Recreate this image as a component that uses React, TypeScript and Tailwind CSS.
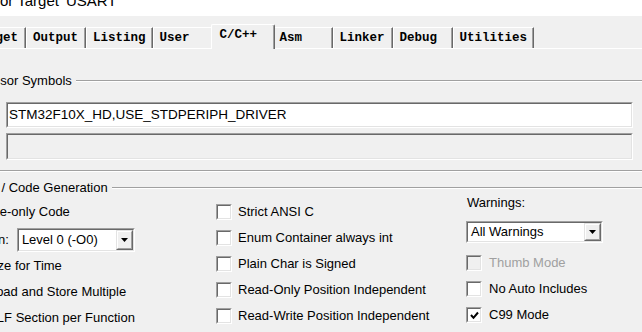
import React from "react";

const CB = ({ checked = false, disabled = false }: { checked?: boolean; disabled?: boolean }) => (
  <div className="w-[16px] h-[16px] shrink-0 border border-t-[#a0a0a0] border-l-[#a0a0a0] border-b-white border-r-white">
    <div
      className={
        disabled
          ? "w-full h-full border border-t-[#696969] border-l-[#696969] border-b-[#e3e3e3] border-r-[#e3e3e3] bg-[#f0f0f0]"
          : "w-full h-full border border-t-[#696969] border-l-[#696969] border-b-[#e3e3e3] border-r-[#e3e3e3] bg-white flex items-center justify-center"
      }
    >
      {checked && (
        <svg width="9" height="9" viewBox="0 0 9 9">
          <path d="M1 4 L3.5 6.8 L8 1.5" stroke="black" strokeWidth="2" fill="none" />
        </svg>
      )}
    </div>
  </div>
);

const DropBtn = () => (
  <div className="w-[17px] h-full shrink-0 border border-t-[#e3e3e3] border-l-[#e3e3e3] border-b-[#696969] border-r-[#696969]">
    <div className="w-full h-full border border-t-white border-l-white border-b-[#a0a0a0] border-r-[#a0a0a0] bg-[#f0f0f0] flex items-center justify-center">
      <svg width="7" height="4" viewBox="0 0 7 4">
        <path d="M0 0 H7 L3.5 4 Z" fill="black" />
      </svg>
    </div>
  </div>
);

const Combo = ({ text, w, h }: { text: string; w: string; h: string }) => (
  <div className={`flex ${w} ${h} shrink-0 border border-t-[#a0a0a0] border-l-[#a0a0a0] border-b-white border-r-white`}>
    <div className="flex flex-1 items-center border border-t-[#696969] border-l-[#696969] border-b-[#e3e3e3] border-r-[#e3e3e3] bg-white pl-[3px]">
      <span className="flex-1 whitespace-nowrap">{text}</span>
      <DropBtn />
    </div>
  </div>
);

const Tab = ({ label, first = false }: { label: string; first?: boolean }) => (
  <div
    className={
      first
        ? "ml-[-34px] h-[21px] min-w-[60px] px-[6px] flex items-center whitespace-nowrap border-t border-t-white border-l border-l-white border-r border-r-[#696969] shadow-[inset_-1px_0_0_#a0a0a0]"
        : "h-[21px] min-w-[60px] px-[6px] flex items-center whitespace-nowrap border-t border-t-white border-l border-l-white border-r border-r-[#696969] shadow-[inset_-1px_0_0_#a0a0a0]"
    }
  >
    {label}
  </div>
);

const Row = ({ children, cls }: { children: React.ReactNode; cls: string }) => (
  <div className={`flex items-center ${cls}`}>{children}</div>
);

export default function App() {
  return (
    <div className="w-[642px] h-[332px] overflow-hidden bg-[#f0f0f0] font-['Liberation_Sans',Arial,sans-serif] text-[13px] text-black">
      {/* title bar */}
      <div className="h-[16px] bg-white overflow-hidden">
        <div className="ml-[-60px] mt-[-8px] text-[15px] leading-[17px] whitespace-nowrap">Options for Target 'USART'</div>
      </div>

      {/* tabs */}
      <div className="h-[33px] flex items-end border-b border-b-white font-['Liberation_Mono',monospace] font-bold text-[12.5px]">
        <Tab label="Target" first />
        <Tab label="Output" />
        <Tab label="Listing" />
        <Tab label="User" />
        <div className="relative z-10 mb-[-1px] mx-[-2px] h-[25px] min-w-[64px] px-[8px] pt-[1px] flex items-start whitespace-nowrap bg-[#f0f0f0] border-t border-t-white border-l border-l-white border-r border-r-[#696969] shadow-[inset_-1px_0_0_#a0a0a0] rounded-t-[2px]">
          C/C++
        </div>
        <Tab label="Asm" />
        <Tab label="Linker" />
        <Tab label="Debug" />
        <Tab label="Utilities" />
      </div>

      {/* Preprocessor Symbols group */}
      <div className="mt-[24px] h-[16px] flex items-center">
        <span className="ml-[-59px] whitespace-nowrap">Preprocessor Symbols</span>
        <div className="ml-[4px] flex-1 h-[2px] border-t border-t-[#a0a0a0] border-b border-b-white" />
      </div>
      <div className="mt-[13px] ml-[6px] w-[627px] h-[26px] border border-t-[#a0a0a0] border-l-[#a0a0a0] border-b-white border-r-white">
        <div className="w-full h-full border border-t-[#696969] border-l-[#696969] border-b-[#e3e3e3] border-r-[#e3e3e3] bg-white flex items-center pl-[1px] text-[13.5px] whitespace-nowrap">
          STM32F10X_HD,USE_STDPERIPH_DRIVER
        </div>
      </div>
      <div className="mt-[5px] ml-[6px] w-[627px] h-[27px] border border-t-[#a0a0a0] border-l-[#a0a0a0] border-b-white border-r-white">
        <div className="w-full h-full border border-t-[#696969] border-l-[#696969] border-b-[#e3e3e3] border-r-[#e3e3e3] bg-[#f0f0f0]" />
      </div>
      <div className="mt-[10px] h-[2px] border-t border-t-[#a0a0a0] border-b border-b-white" />

      {/* Language / Code Generation group */}
      <div className="mt-[8px] h-[16px] flex items-center">
        <span className="ml-[-60px] whitespace-nowrap">Language / Code Generation</span>
        <div className="ml-[4px] flex-1 h-[2px] border-t border-t-[#a0a0a0] border-b border-b-white" />
      </div>

      <div className="flex">
        {/* left column */}
        <div className="ml-[-62px] w-[278px] shrink-0">
          <Row cls="mt-[3px] h-[26px] gap-[6px]">
            <CB />
            <span className="whitespace-nowrap">Execute-only Code</span>
          </Row>
          <Row cls="mt-[3px] h-[24px]">
            <span className="ml-[-5px] whitespace-nowrap">Optimization:</span>
            <div className="ml-[8px]">
              <Combo text="Level 0 (-O0)" w="w-[118px]" h="h-[24px]" />
            </div>
          </Row>
          <Row cls="mt-[1px] h-[26px] gap-[6px]">
            <CB />
            <span className="whitespace-nowrap">Optimize for Time</span>
          </Row>
          <Row cls="h-[26px] gap-[6px]">
            <CB />
            <span className="whitespace-nowrap">Split Load and Store Multiple</span>
          </Row>
          <Row cls="h-[26px] gap-[6px]">
            <CB />
            <span className="whitespace-nowrap">One ELF Section per Function</span>
          </Row>
        </div>

        {/* middle column */}
        <div className="w-[250px] shrink-0 pt-[3px]">
          {[
            "Strict ANSI C",
            "Enum Container always int",
            "Plain Char is Signed",
            "Read-Only Position Independent",
            "Read-Write Position Independent",
          ].map((t) => (
            <Row key={t} cls="h-[26px] gap-[6px]">
              <CB />
              <span className="whitespace-nowrap">{t}</span>
            </Row>
          ))}
        </div>

        {/* right column */}
        <div className="flex-1 mt-[-1px]">
          <div className="h-[16px] leading-[16px] pl-[1px] whitespace-nowrap">Warnings:</div>
          <div className="mt-[10px]">
            <Combo text="All Warnings" w="w-[137px]" h="h-[22px]" />
          </div>
          <Row cls="mt-[7px] h-[26px] gap-[7px]">
            <CB disabled />
            <span className="whitespace-nowrap text-[#a0a0a0]">Thumb Mode</span>
          </Row>
          <Row cls="h-[26px] gap-[7px]">
            <CB />
            <span className="whitespace-nowrap">No Auto Includes</span>
          </Row>
          <Row cls="h-[26px] gap-[7px]">
            <CB checked />
            <span className="whitespace-nowrap">C99 Mode</span>
          </Row>
        </div>
      </div>
    </div>
  );
}
